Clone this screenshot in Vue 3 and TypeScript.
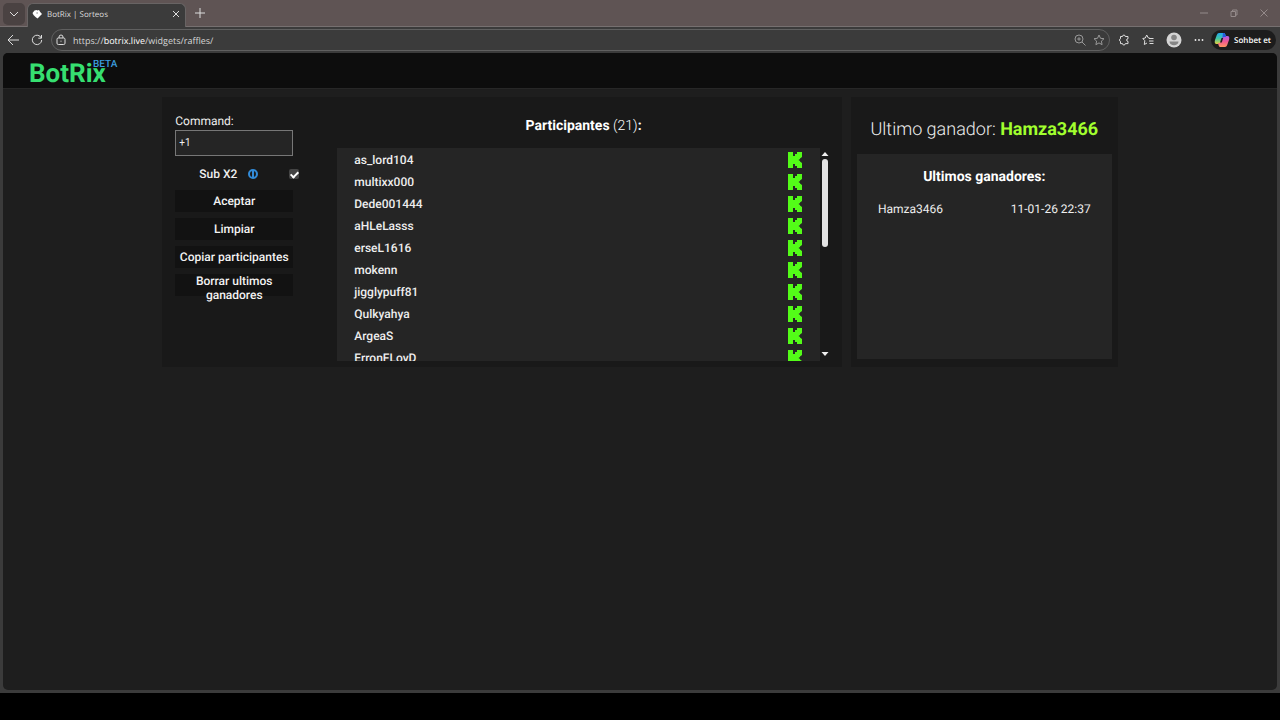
<script setup lang="ts">
import { ref } from 'vue'

interface Winner {
  name: string
  date: string
}

const command = ref('+1')
const subDouble = ref(true)
const url = { scheme: 'https://', host: 'botrix.live', path: '/widgets/raffles/' }
const total = 21
const participants: string[] = [
  'as_lord104',
  'multixx000',
  'Dede001444',
  'aHLeLasss',
  'erseL1616',
  'mokenn',
  'jigglypuff81',
  'Qulkyahya',
  'ArgeaS',
  'ErronFLoyD',
]
const winners: Winner[] = [{ name: 'Hamza3466', date: '11-01-26 22:37' }]
</script>

<template>
  <div class="window">
    <div class="titlebar">
      <button class="tab-menu" aria-label="Tab menu">
        <svg width="10" height="6" viewBox="0 0 10 6"><path d="M1 1l4 4 4-4" /></svg>
      </button>
      <div class="tab">
        <svg class="favicon" width="10" height="10" viewBox="0 0 10 10">
          <path d="M2.500 1.500L4.500 1l1 .6L7 1l1.200 2L10 5 8 7 5.500 9.500 3.500 8 1.500 6 .5 4z" />
          <path class="hole" d="M4.500 3.500h1.200v1H4.500z" />
        </svg>
        <span class="tab-title">BotRix | Sorteos</span>
        <button class="icon" aria-label="Close tab">
          <svg width="8" height="8" viewBox="0 0 8 8"><path d="M1 1l6 6M7 1L1 7" /></svg>
        </button>
      </div>
      <button class="icon new-tab" aria-label="New tab">
        <svg width="10" height="10" viewBox="0 0 10 10"><path d="M5 0v10M0 5h10" /></svg>
      </button>
      <div class="window-buttons">
        <button class="icon" aria-label="Minimize">
          <svg width="8" height="8" viewBox="0 0 8 8"><path d="M0 4h8" /></svg>
        </button>
        <button class="icon" aria-label="Restore">
          <svg width="8" height="8" viewBox="0 0 8 8"><path d="M1 2.500h4.500v5H1zM2.500 2.500V1H7v5H5.500" /></svg>
        </button>
        <button class="icon" aria-label="Close">
          <svg width="8" height="8" viewBox="0 0 8 8"><path d="M0.500 0.500l7 7M7.500 0.500l-7 7" /></svg>
        </button>
      </div>
    </div>

    <div class="toolbar">
      <button class="icon" aria-label="Back">
        <svg width="12" height="12" viewBox="0 0 12 12"><path d="M6 1L1 6l5 5M1 6h11" /></svg>
      </button>
      <button class="icon" aria-label="Reload">
        <svg width="12" height="12" viewBox="0 0 12 12"><path d="M10.300 4A4.700 4.700 0 1 0 10.700 6M10.500 1v3.200H7.300" /></svg>
      </button>
      <div class="address">
        <svg width="10" height="12" viewBox="0 0 10 12">
          <rect x="1" y="4" width="8" height="6.500" rx="1.300" />
          <path d="M3 4V3a2 2 0 0 1 4 0v1M4.500 7.200h1" />
        </svg>
        <a class="url" href="#">{{ url.scheme }}<b>{{ url.host }}</b>{{ url.path }}</a>
        <button class="icon dim" aria-label="Zoom">
          <svg width="12" height="12" viewBox="0 0 12 12"><circle cx="5" cy="5" r="4" /><path d="M8 8l3.500 3.500M5 3.200v3.600M3.200 5h3.600" /></svg>
        </button>
        <button class="icon dim" aria-label="Add to favourites">
          <svg width="12" height="12" viewBox="0 0 12 12"><path d="M6 1l1.500 3.300 3.500.4-2.600 2.400.7 3.600L6 8.900l-3.100 1.800.7-3.600L1 4.700l3.500-.4z" /></svg>
        </button>
      </div>
      <div class="actions">
        <button class="icon" aria-label="Extensions">
          <svg width="12" height="12" viewBox="0 0 12 12"><path d="M2.500 2.500h2a1.400 1.400 0 0 1 2.800 0h2.700v2.200a1.300 1.300 0 0 0 0 2.700v2.200H7.300a1.400 1.400 0 0 1-2.800 0h-2V7.400a1.400 1.400 0 0 1 0-2.700z" /></svg>
        </button>
        <button class="icon" aria-label="Favourites">
          <svg width="12" height="12" viewBox="0 0 12 12"><path d="M7.500 4L6.200 3.800 4.700 1 3.300 4 .8 4.500l2 2.200L2.300 10.500 5 9M7 4.500h4.500M7 7h4.500M7.500 9.500h4" /></svg>
        </button>
        <button class="icon" aria-label="Profile">
          <svg class="avatar" width="16" height="16" viewBox="0 0 16 16">
            <circle class="disc" cx="8" cy="8" r="7.500" />
            <circle class="person" cx="8" cy="5.500" r="2.800" />
            <path class="person" d="M3.500 9.500h9c0 5-9 5-9 0z" />
          </svg>
        </button>
        <button class="icon" aria-label="More">
          <svg class="dots" width="10" height="4" viewBox="0 0 10 4"><circle cx="1.500" cy="2" r="0.900" /><circle cx="5" cy="2" r="0.900" /><circle cx="8.500" cy="2" r="0.900" /></svg>
        </button>
      </div>
      <button class="chat">
        <svg width="16" height="16" viewBox="0 0 16 16">
          <defs>
            <linearGradient id="cool" x1="0" y1="0" x2="0" y2="1">
              <stop offset="0" stop-color="#23a7ee" />
              <stop offset="0.500" stop-color="#42c8a0" />
              <stop offset="1" stop-color="#f0cf38" />
            </linearGradient>
            <linearGradient id="warm" x1="0" y1="0" x2="0" y2="1">
              <stop offset="0" stop-color="#a75cf0" />
              <stop offset="0.500" stop-color="#ee5694" />
              <stop offset="1" stop-color="#ff9560" />
            </linearGradient>
          </defs>
          <path d="M5 1h5q1 0 1.500 2L12 5h-2L7.500 11Q7 13 5 12H2.500Q0 12 1 8l1.800-5Q3.500 1 5 1z" fill="url(#cool)" />
          <path d="M11 15H6q-1 0-1.500-2L4 11h2l2.500-6Q9 3 11 4h2.500Q16 4 15 8l-1.800 5Q12.500 15 11 15z" fill="url(#warm)" />
          <path d="M9 1h1q1 0 1.500 2L12 5H9.500L8.300 7z" fill="#265bdc" />
          <path d="M7.500 6h1.700L7.800 10.500H6z" fill="#1c1c1c" />
        </svg>
        <span>Sohbet et</span>
      </button>
    </div>

    <div class="page">
      <header class="site-header">
        <a class="logo" href="#">BotRix<sup class="beta">BETA</sup></a>
      </header>

      <main class="content">
        <section class="panel raffle">
          <form class="controls" @submit.prevent>
            <label class="command-label" for="command">Command:</label>
            <input id="command" v-model="command" class="command" type="text" />
            <div class="sub-row">
              <label for="sub">Sub X2</label>
              <svg width="10" height="10" viewBox="0 0 10 10"><circle cx="5" cy="5" r="4" /><path d="M5 2v6" /></svg>
              <input id="sub" v-model="subDouble" type="checkbox" />
            </div>
            <button class="action" type="submit">Aceptar</button>
            <button class="action" type="button">Limpiar</button>
            <button class="action" type="button">Copiar participantes</button>
            <button class="action" type="button">Borrar ultimos ganadores</button>
          </form>

          <div class="participants">
            <h2 class="heading">Participantes <span>({{ total }})</span>:</h2>
            <div class="scroller">
              <ul class="list">
                <li v-for="name in participants" :key="name">
                  <span>{{ name }}</span>
                  <svg width="14" height="16" viewBox="0 0 14 16">
                    <path d="M0 0h5v4h2V2h2V0h5v5l-2 1.500V7l-1.500 1L12 9v.5l2 1.500v5H9v-2H7v-2H5v4H0z" />
                  </svg>
                </li>
              </ul>
              <div class="scrollbar">
                <svg width="8" height="6" viewBox="0 0 8 6"><path d="M0.500 5L4 1l3.500 4z" /></svg>
                <div class="track"><div class="thumb"></div></div>
                <svg width="8" height="6" viewBox="0 0 8 6"><path d="M0.500 1L4 5l3.500-4z" /></svg>
              </div>
            </div>
          </div>
        </section>

        <section class="panel last">
          <h1 class="last-winner">Ultimo ganador: <b>{{ winners[0].name }}</b></h1>
          <div class="winners">
            <h2 class="heading">Ultimos ganadores:</h2>
            <table>
              <tbody>
                <tr v-for="w in winners" :key="w.date">
                  <td>{{ w.name }}</td>
                  <td class="date">{{ w.date }}</td>
                </tr>
              </tbody>
            </table>
          </div>
        </section>
      </main>
    </div>
  </div>
</template>

<style>
body {
  margin: 0;
  background: #000;
}
</style>

<style scoped>
* {
  box-sizing: border-box;
}
button {
  border: 0;
  padding: 0;
  background: none;
  font-family: inherit;
  color: inherit;
  text-rendering: inherit;
}
a {
  color: inherit;
  text-decoration: none;
}
.window {
  display: flex;
  flex-direction: column;
  min-height: calc(100vh - 27px);
  background: #3b3b3b;
  color: #eee;
  font-family: "Open Sans", "Noto Sans", sans-serif;
  text-rendering: geometricPrecision;
}
.titlebar {
  display: flex;
  align-items: stretch;
  height: 27px;
  padding: 3px 3px 0;
  background: #5f5454;
  border-bottom: 1px solid #767070;
}
.icon {
  display: flex;
  align-items: center;
  justify-content: center;
}
.titlebar svg,
.toolbar .icon svg,
.address svg {
  fill: none;
  stroke: #ddd;
  stroke-width: 1;
}
.tab-menu {
  width: 22px;
  margin-bottom: 1px;
  border-radius: 5px;
  background: #4a4242;
}
.tab-menu svg {
  display: block;
  margin: auto;
}
.tab {
  display: flex;
  align-items: center;
  gap: 5px;
  width: 159px;
  margin: 0 0 -1px 2px;
  padding: 0 5px 3px 4px;
  border: 1px solid #686464;
  border-bottom: 0;
  border-radius: 6px 6px 0 0;
  background: #3b3b3b;
}
.titlebar .favicon {
  fill: #fff;
  stroke: none;
}
.titlebar .favicon .hole {
  fill: #555;
}
.tab-title {
  flex: 1;
  font-size: 8px;
  color: #ddd;
}
.new-tab {
  width: 28px;
  padding-bottom: 3px;
}
.window-buttons {
  display: flex;
  gap: 22px;
  margin-left: auto;
  padding: 0 9px 3px 0;
}
.window-buttons svg {
  stroke: #948a8a;
}
.toolbar {
  display: flex;
  align-items: center;
  height: 26px;
  padding: 0 4px 0 7px;
  gap: 12px;
}
.address {
  flex: 1;
  display: flex;
  align-items: center;
  gap: 7px;
  height: 22px;
  margin: 0 -4px;
  padding: 0 4px;
  border: 1px solid #606060;
  border-radius: 11px;
}
.url {
  flex: 1;
  font-size: 9px;
  color: #d5d5d5;
}
.url b {
  font-weight: 500;
  color: #fff;
}
.toolbar .dim svg {
  stroke: #999;
}
.actions {
  display: flex;
  align-items: center;
  gap: 12px;
}
.toolbar .icon .avatar,
.toolbar .icon .dots {
  stroke: none;
  fill: #eee;
}
.disc {
  fill: #d4d4d4;
}
.person {
  fill: #858585;
}
.chat {
  display: flex;
  align-items: center;
  gap: 4px;
  height: 20px;
  padding: 0 5px 0 3px;
  margin-left: -5px;
  border-radius: 10px;
  background: #1c1c1c;
  font-size: 8px;
  font-weight: 600;
  color: #fff;
}
.page {
  flex: 1;
  margin: 0 3px 3px;
  border-radius: 5px;
  overflow: hidden;
  background: #1e1e1e;
  font-family: Roboto, sans-serif;
}
.site-header {
  height: 36px;
  padding-left: 26px;
  background: #0d0d0d;
  border-bottom: 1px solid #272727;
}
.logo {
  position: relative;
  display: inline-block;
  font-size: 26px;
  line-height: 43px;
  font-weight: 700;
  color: #36df70;
}
.beta {
  position: absolute;
  left: 64px;
  top: 6px;
  font-size: 10px;
  line-height: 12px;
  font-weight: 500;
  color: #3b9ddd;
}
.content {
  display: grid;
  grid-template-columns: 680fr 267fr;
  gap: 9px;
  width: 75%;
  margin: 8px auto 0;
}
.panel {
  height: 270px;
  background: #191919;
}
.raffle {
  display: flex;
  gap: 44px;
  padding: 15px 12px 6px 13px;
}
.controls {
  display: flex;
  flex-direction: column;
  width: 118px;
}
.command-label {
  padding-top: 1px;
  line-height: 17px;
  font-size: 12px;
}
.command {
  width: 100%;
  height: 26px;
  padding: 0 3px 2px;
  border: 1px solid #777;
  background: #252525;
  color: #eee;
  font: 10px Roboto, sans-serif;
}
.sub-row {
  display: flex;
  align-items: center;
  gap: 11px;
  height: 20px;
  margin: 8px -6px 6px 24px;
  font-size: 12px;
  font-weight: 500;
}
.sub-row svg {
  fill: none;
  stroke: #328bd8;
  stroke-width: 2;
}
.sub-row input {
  appearance: none;
  display: grid;
  place-items: center;
  width: 10px;
  height: 10px;
  margin: 0 0 0 auto;
  border-radius: 2px;
  background: #444;
}
.sub-row input:checked::before {
  content: "";
  width: 3px;
  height: 6px;
  margin-bottom: 1px;
  border: solid #fff;
  border-width: 0 2px 2px 0;
  transform: rotate(45deg);
}
.action {
  height: 22px;
  margin-bottom: 6px;
  background: #121212;
  font-size: 12px;
  line-height: 14px;
  font-weight: 500;
  color: #f2f2f2;
}
.participants {
  flex: 1;
  display: flex;
  flex-direction: column;
}
.heading {
  margin: 0;
  font-size: 14px;
  line-height: 18px;
  font-weight: 700;
  text-align: center;
  color: #fff;
}
.heading span {
  font-weight: 300;
}
.participants .heading {
  margin: 5px 0 13px;
}
.scroller {
  display: flex;
  height: 213px;
}
.list {
  flex: 1;
  margin: 0;
  padding: 1px 18px 0 17px;
  overflow: hidden;
  list-style: none;
  background: #252525;
}
.list li {
  display: flex;
  align-items: center;
  justify-content: space-between;
  height: 22px;
  font-size: 12px;
  font-weight: 500;
}
.list svg {
  fill: #53fc18;
}
.scrollbar {
  display: flex;
  flex-direction: column;
  align-items: center;
  width: 10px;
  padding: 3px 0 4px;
}
.scrollbar svg {
  fill: #eee;
}
.track {
  flex: 1;
  width: 6px;
  padding-top: 2px;
}
.thumb {
  height: 46%;
  border-radius: 3px;
  background: #e2e2e2;
}
.last {
  display: flex;
  flex-direction: column;
  padding: 21px 6px 8px;
}
.last-winner {
  margin: 0 0 12px;
  font-size: 18px;
  line-height: 24px;
  font-weight: 300;
  text-align: center;
}
.last-winner b {
  font-weight: 700;
  color: #a1ff2e;
}
.winners {
  flex: 1;
  padding: 14px 21px;
  background: #252525;
}
table {
  width: 100%;
  margin-top: 15px;
  border-collapse: collapse;
  font-size: 12px;
  line-height: 16px;
}
td {
  padding: 0;
}
.date {
  text-align: right;
}
</style>
